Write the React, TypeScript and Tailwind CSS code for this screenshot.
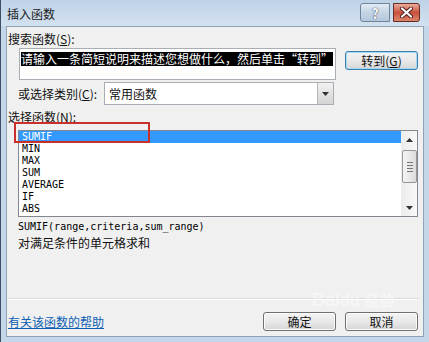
import React from "react";

const cjk = "font-['Noto_Sans_CJK_SC','Noto_Sans',sans-serif]";
const mono = "font-['DejaVu_Sans_Mono','Liberation_Mono',monospace]";

function Btn({ children, w, focused }: { children: React.ReactNode; w: string; focused?: boolean }) {
  return (
    <div
      className={`${w} h-[19px] rounded-[3px] border ${
        focused ? "border-[#3c7fb1] shadow-[inset_0_0_0_1px_#a6d8f3]" : "border-[#707070] shadow-[inset_0_0_0_1px_#fbfbfb]"
      } bg-gradient-to-b from-[#f3f3f3] via-[#e9e9e9] to-[#d6d6d6] flex items-center justify-center text-[12px] leading-none text-[#111] ${cjk}`}
    >
      {children}
    </div>
  );
}

function Tri({ down }: { down?: boolean }) {
  return (
    <svg width="7" height="4" viewBox="0 0 7 4">
      {down ? <polygon points="0,0 7,0 3.5,4" fill="#333" /> : <polygon points="0,4 7,4 3.5,0" fill="#333" />}
    </svg>
  );
}

export default function App() {
  const items = ["SUMIF", "MIN", "MAX", "SUM", "AVERAGE", "IF", "ABS"];
  return (
    <div className={`w-[429px] h-[342px] overflow-hidden bg-[#c4d6ea] border-l border-[#3d4f63] flex flex-col ${cjk}`}>
      {/* title bar */}
      <div className="h-[26px] shrink-0 flex items-start bg-gradient-to-b from-[#bed2e7] to-[#d3e1ef]">
        <div className="ml-[6px] mt-[6px] text-[12px] leading-[16px] text-[#1b1b1b]">插入函数</div>
        <div className="flex-1" />
        <div className="mt-[3px] w-[30px] h-[19px] rounded-l-[3px] border border-[#6f859c] bg-gradient-to-b from-[#e2ebf4] via-[#c5d5e6] to-[#b4c7db] flex items-center justify-center">
          <span className="text-[14px] font-bold leading-none text-[#f4f6f9] [text-shadow:0_0_1px_#3d4a57,0_0_1px_#3d4a57]">?</span>
        </div>
        <div className="mt-[3px] ml-[3px] mr-[9px] w-[27px] h-[19px] rounded-r-[3px] border border-[#6a2b22] bg-gradient-to-b from-[#e8ad9c] via-[#c9503d] to-[#d9866a] flex items-center justify-center">
          <svg width="13" height="11" viewBox="0 0 13 11">
            <path d="M2 1.5 L11 9.5 M11 1.5 L2 9.5" stroke="#4a1a14" strokeWidth="4" strokeLinecap="round" />
            <path d="M2 1.5 L11 9.5 M11 1.5 L2 9.5" stroke="#ffffff" strokeWidth="2.2" strokeLinecap="round" />
          </svg>
        </div>
      </div>

      {/* content */}
      <div className="relative flex-1 ml-[5px] mr-[5px] mb-[5px] border border-[#8ea3b8] bg-[#f0f0f0] flex flex-col text-[12px] text-[#111]">
        <div className="ml-[1px] mt-[4px] leading-[16px]">
          搜索函数(<span className="underline">S</span>):
        </div>

        <div className="mt-[1px] flex items-start">
          <div className="ml-[12px] w-[317px] h-[32px] border border-[#a9adb4] bg-white pl-[1px] pt-[1px]">
            <span className="bg-black text-white leading-[14px] inline-block">
              请输入一条简短说明来描述您想做什么，然后单击“转到”
            </span>
          </div>
          <div className="ml-[9px] mt-[3px]">
            <Btn w="w-[73px]" focused>
              转到(<span className="underline">G</span>)
            </Btn>
          </div>
        </div>

        <div className="mt-[2px] flex items-center">
          <div className="ml-[11px] w-[86px] leading-[16px]">
            或选择类别(<span className="underline">C</span>):
          </div>
          <div className="w-[230px] h-[23px] border border-[#a9adb4] bg-white flex items-center">
            <div className="flex-1 pl-[4px] leading-[16px]">常用函数</div>
            <div className="w-[16px] h-[21px] border-l border-[#b5b5b5] bg-gradient-to-b from-[#f2f2f2] to-[#d4d4d4] flex items-center justify-center">
              <Tri down />
            </div>
          </div>
        </div>

        <div className="ml-[1px] mt-[4px] leading-[16px]">
          选择函数(<span className="underline">N</span>):
        </div>

        <div className="ml-[11px] mt-[5px] w-[400px] h-[87px] border border-[#828790] bg-white flex">
          <div className={`flex-1 flex flex-col ${mono} text-[10px] text-black`}>
            {items.map((it, i) => (
              <div
                key={it}
                className={`h-[12px] leading-[12px] pl-[3px] ${i === 0 ? "bg-[#3399ff] text-white" : ""}`}
              >
                {it}
              </div>
            ))}
          </div>
          <div className="w-[16px] flex flex-col bg-gradient-to-r from-[#ececec] to-[#f8f8f8] border-l border-[#ededed]">
            <div className="h-[17px] flex items-center justify-center">
              <Tri />
            </div>
            <div className="flex-1">
              <div className="mt-[2px] h-[33px] rounded-[2px] border border-[#979797] bg-gradient-to-r from-[#f4f4f4] to-[#dcdcdc] flex flex-col items-center justify-center gap-[2px]">
                <div className="w-[6px] h-[1px] bg-[#777]" />
                <div className="w-[6px] h-[1px] bg-[#777]" />
                <div className="w-[6px] h-[1px] bg-[#777]" />
                <div className="w-[6px] h-[1px] bg-[#777]" />
              </div>
            </div>
            <div className="h-[17px] flex items-center justify-center">
              <Tri down />
            </div>
          </div>
        </div>

        <div className={`ml-[11px] mt-[4px] h-[12px] leading-[12px] ${mono} text-[10px] text-black`}>
          SUMIF(range,criteria,sum_range)
        </div>
        <div className="ml-[11px] mt-[2px] leading-[16px] text-[12px]">对满足条件的单元格求和</div>

        <div className="flex-1" />
        <div className="ml-[1px] mr-[4px] h-[1px] bg-[#d9d9d9] border-b border-white box-content" />
        <div className="mt-[12px] mb-[5px] flex items-center">
          <div className="ml-[1px] text-[#0b5fb3] underline leading-[16px]">有关该函数的帮助</div>
          <div className="flex-1" />
          <Btn w="w-[73px]">确定</Btn>
          <div className="w-[9px]" />
          <Btn w="w-[73px]">取消</Btn>
          <div className="w-[5px]" />
        </div>

        {/* annotation overlay */}
        <div className="absolute left-[7px] top-[95px] w-[136px] h-[21px] border-2 border-[#c9302c]" />
        {/* watermark */}
        <div className="absolute left-[305px] top-[264px] text-[18px] font-bold text-white/45 font-['Liberation_Sans',sans-serif] pointer-events-none leading-none">
          Bai<span className="text-[16px]">du</span> <span className={`${cjk} text-[15px]`}>经验</span>
        </div>
      </div>
    </div>
  );
}
